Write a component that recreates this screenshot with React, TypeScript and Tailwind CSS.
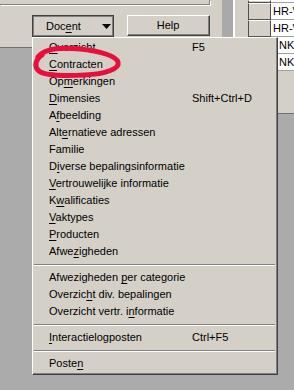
const ITEMS: ({ pre: string; u: string; post: string; sc?: string } | "sep")[] = [
  { pre: "", u: "O", post: "verzicht", sc: "F5" },
  { pre: "", u: "C", post: "ontracten" },
  { pre: "Op", u: "m", post: "erkingen" },
  { pre: "", u: "D", post: "imensies", sc: "Shift+Ctrl+D" },
  { pre: "A", u: "f", post: "beelding" },
  { pre: "Alt", u: "e", post: "rnatieve adressen" },
  { pre: "Familie", u: "", post: "" },
  { pre: "D", u: "i", post: "verse bepalingsinformatie" },
  { pre: "", u: "V", post: "ertrouwelijke informatie" },
  { pre: "K", u: "w", post: "alificaties" },
  { pre: "", u: "V", post: "aktypes" },
  { pre: "", u: "P", post: "roducten" },
  { pre: "Afwe", u: "z", post: "igheden" },
  "sep",
  { pre: "Afwezigheden ", u: "p", post: "er categorie" },
  { pre: "Overzic", u: "h", post: "t div. bepalingen" },
  { pre: "Overzicht vertr. i", u: "n", post: "formatie" },
  "sep",
  { pre: "", u: "I", post: "nteractielogposten", sc: "Ctrl+F5" },
  "sep",
  { pre: "Poste", u: "n", post: "" },
];

function GridRow({ h, text, pad }: { h: string; text?: string; pad?: string }) {
  return (
    <div className={`flex ${h}`}>
      <div className="w-[13px] shrink-0" />
      <div className="w-[23px] shrink-0 border border-[#505050] border-t-white bg-[#d4d0c8]" />
      <div className={`flex min-w-0 flex-1 items-center overflow-hidden whitespace-nowrap border-b border-[#a0a0a0] bg-white ${pad ?? "pl-[2px]"}`}>
        {text}
      </div>
    </div>
  );
}

export default function App() {
  return (
    <div className="relative h-[390px] w-[294px] overflow-hidden bg-[#ababab] font-['Liberation_Sans',Arial,sans-serif] text-[11px] leading-none text-black">
      <div className="flex items-start">
        {/* form area */}
        <div className="h-[48px] w-[222px] shrink-0 border-b border-[#6e6e6e] bg-[#d4d0c8]">
          <div className="h-[5px] w-[210px] border-b border-r border-[#808080] shadow-[1px_1px_0_#fff]" />
          <div className="ml-[32px] mt-[10px] flex items-start gap-[13px]">
            <div className="h-[22px] w-[82px] border border-[#404040]">
              <div className="flex h-full items-center border border-[#808080] pl-[12px] pr-[1px]">
                <span>
                  Doc<u className="underline-offset-[2px]">e</u>nt
                </span>
                <svg className="ml-auto" width="9" height="5" viewBox="0 0 9 5">
                  <path d="M0 0H9L4.5 5Z" fill="#000" />
                </svg>
              </div>
            </div>
            <div className="h-[21px] w-[83px] border border-[#404040] border-l-white border-t-white">
              <div className="flex h-full items-center justify-center border-b border-r border-[#808080]">Help</div>
            </div>
          </div>
        </div>
        {/* scroll strip */}
        <div className="h-[113px] w-[13px] shrink-0 border-r-2 border-white bg-[#a9a9a9]" />
        {/* grid */}
        <div className="h-[114px] min-w-0 flex-1 border-b border-[#6e6e6e] bg-[#d4d0c8]">
          <GridRow h="h-[3px]" />
          <GridRow h="h-[17px]" text="HR-V" />
          <GridRow h="h-[17px]" text="HR-V" />
          <GridRow h="h-[17px]" text="NK-V" pad="pl-[8px]" />
          <GridRow h="h-[17px]" text="NK-V" pad="pl-[8px]" />
        </div>
      </div>

      {/* dropdown menu */}
      <div className="absolute left-[32px] top-[37px] w-[246px] border border-[#404040] border-l-white border-t-white">
        <div className="border-b border-r border-[#808080] bg-[#d4d0c8] py-[1px]">
          {ITEMS.map((it, i) =>
            it === "sep" ? (
              <div key={i} className="flex h-[9px] items-center px-[1px]">
                <div className="w-full border-b border-t border-[#808080] border-b-white" />
              </div>
            ) : (
              <div key={i} className="flex h-[17px] items-center whitespace-nowrap pl-[16px]">
                <span className="w-[143px]">
                  {it.pre}
                  {it.u && <u className="underline-offset-[2px]">{it.u}</u>}
                  {it.post}
                </span>
                {it.sc && <span>{it.sc}</span>}
              </div>
            )
          )}
        </div>
      </div>

      {/* red marker */}
      <svg className="pointer-events-none absolute left-0 top-0" width="294" height="390" viewBox="0 0 294 390">
        <path
          d="M38 57 C44 49 60 47 80 49 C100 51 116 56 118 62 C120 69 105 74 85 75 C65 76 45 76 39 71 C34 67 35 60 42 55"
          fill="none"
          stroke="#e8103a"
          strokeWidth="5"
          strokeLinecap="round"
          strokeLinejoin="round"
        />
      </svg>
    </div>
  );
}
